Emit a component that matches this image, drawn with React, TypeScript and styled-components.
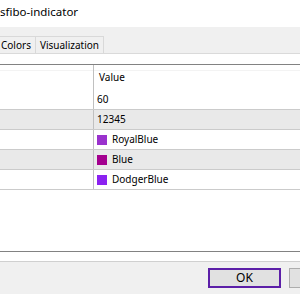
import React from "react";
import styled, { createGlobalStyle } from "styled-components";

const Global = createGlobalStyle`
  html, body { margin: 0; padding: 0; }
  body {
    width: 300px;
    height: 294px;
    overflow: hidden;
    background: #f0f0f0;
    font-family: "Noto Sans", "Open Sans", sans-serif;
    color: #000;
  }
`;

const Window = styled.div`
  width: 300px;
  height: 294px;
  overflow: hidden;
  display: flex;
  flex-direction: column;
  background: #f0f0f0;
`;

const TitleBar = styled.div`
  height: 27px;
  box-sizing: border-box;
  background: #fff;
  font-size: 11.5px;
  line-height: 23px;
  padding-left: 0;
  white-space: nowrap;
`;

const TabStrip = styled.div`
  height: 26px;
  display: flex;
  align-items: flex-end;
  margin-left: -4px;
`;

const Tab = styled.div<{ $first?: boolean }>`
  height: 17px;
  box-sizing: border-box;
  padding: 0 4px;
  border-top: 1px solid #d9d9d9;
  border-right: 1px solid #d9d9d9;
  border-left: ${(p) => (p.$first ? "1px solid #d9d9d9" : "none")};
  background: #f0f0f0;
  font-size: 10px;
  line-height: 16px;
  white-space: nowrap;
`;

const TabPage = styled.div`
  background: #fff;
  border-top: 1px solid #dadada;
  border-bottom: 1px solid #d0d0d0;
  padding: 10px 0 9px;
`;

const List = styled.div`
  height: 188px;
  box-sizing: border-box;
  border-top: 1px solid #828282;
  border-bottom: 1px solid #828282;
  background: #fff;
  font-size: 10px;
`;

const Row = styled.div<{ $alt?: boolean; $lined?: boolean; $last?: boolean }>`
  display: grid;
  grid-template-columns: 93px 1fr;
  box-sizing: border-box;
  background: ${(p) => (p.$alt ? "#e9e9e9" : "#fff")};
  border-top: ${(p) => (p.$lined ? "1px solid #cbcbcb" : "none")};
  border-bottom: ${(p) => (p.$last ? "1px solid #cbcbcb" : "none")};
  height: ${(p) => (p.$last ? "21px" : "20px")};
`;

const HeaderRow = styled.div`
  display: grid;
  grid-template-columns: 93px 1fr;
  height: 24px;
  background: linear-gradient(
    to bottom,
    transparent 5px,
    #f3f3f3 5px,
    #f3f3f3 6px,
    transparent 6px
  );
`;

const NameCell = styled.div``;

const ValueCell = styled.div<{ $pad?: number }>`
  border-left: 1px solid #c0c0c0;
  padding-left: ${(p) => p.$pad ?? 3}px;
  display: flex;
  align-items: center;
  white-space: nowrap;
  line-height: 19px;
`;

const Swatch = styled.span<{ $color: string }>`
  width: 10px;
  height: 10px;
  background: ${(p) => p.$color};
  margin-right: 5px;
  flex: none;
`;

const Footer = styled.div`
  flex: 1;
  display: flex;
  justify-content: flex-end;
  align-items: flex-start;
  gap: 8px;
  padding-top: 6px;
  margin-right: -62px;
`;

const Button = styled.button<{ $default?: boolean }>`
  width: 73px;
  height: 20px;
  box-sizing: border-box;
  background: #e1e1e1;
  border: ${(p) => (p.$default ? "2px solid #5c1fa8" : "1px solid #adadad")};
  font-family: "Noto Sans", "Open Sans", sans-serif;
  font-size: 12px;
  line-height: 14px;
  padding: 0;
  color: #000;
  flex: none;
`;

const rows = [
  { value: "60" },
  { value: "12345" },
  { value: "RoyalBlue", color: "#9a32cd" },
  { value: "Blue", color: "#a3008f" },
  { value: "DodgerBlue", color: "#8b22f0" },
];

export default function App() {
  return (
    <Window>
      <Global />
      <TitleBar>sfibo-indicator</TitleBar>
      <TabStrip>
        <Tab $first>Colors</Tab>
        <Tab>Visualization</Tab>
      </TabStrip>
      <TabPage>
        <List>
          <HeaderRow>
            <NameCell />
            <ValueCell $pad={5}>Value</ValueCell>
          </HeaderRow>
          {rows.map((r, i) => (
            <Row
              key={r.value}
              $alt={i % 2 === 1}
              $lined={i > 0}
              $last={i === rows.length - 1}
            >
              <NameCell />
              <ValueCell>
                {r.color && <Swatch $color={r.color} />}
                {r.value}
              </ValueCell>
            </Row>
          ))}
        </List>
      </TabPage>
      <Footer>
        <Button $default>OK</Button>
        <Button aria-label="Cancel" />
      </Footer>
    </Window>
  );
}
